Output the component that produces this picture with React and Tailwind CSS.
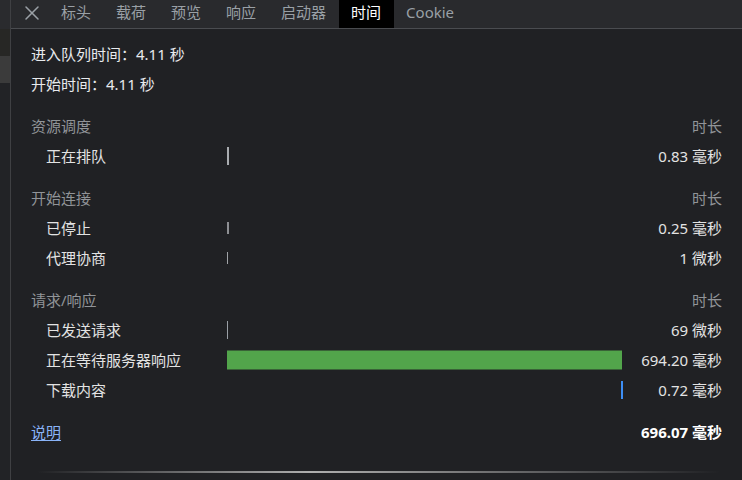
import React from "react";
import { X } from "lucide-react";

const tabs = ["标头", "载荷", "预览", "响应", "启动器", "时间", "Cookie"];

// bars: left/width in px of the bar column, h = bar height, color
const sections = [
  {
    title: "资源调度",
    rows: [
      { label: "正在排队", value: "0.83 毫秒", bar: { left: 0, width: 2, h: 18, color: "#a9acb0" } },
    ],
  },
  {
    title: "开始连接",
    rows: [
      { label: "已停止", value: "0.25 毫秒", bar: { left: 0, width: 2, h: 12, color: "#8d8f93" } },
      { label: "代理协商", value: "1 微秒", bar: { left: 0, width: 1, h: 12, color: "#a0a3a7" } },
    ],
  },
  {
    title: "请求/响应",
    rows: [
      { label: "已发送请求", value: "69 微秒", bar: { left: 0, width: 1, h: 18, color: "#9aa0a6" } },
      { label: "正在等待服务器响应", value: "694.20 毫秒", bar: { left: 0, width: 395, h: 19, color: "#52a54b" } },
      { label: "下载内容", value: "0.72 毫秒", bar: { left: 394, width: 1.5, h: 18, color: "#3d8ef5" } },
    ],
  },
];

export default function App() {
  return (
    <div className="flex h-[480px] w-[742px] overflow-hidden bg-[#202124] font-['Noto_Sans','Noto_Sans_CJK_SC',sans-serif] text-[15px]">
      {/* --- LEFT STRIP (request list edge) --- */}
      <div className="flex w-[11px] flex-col border-r border-[#3f4043]">
        <div className="h-[29px] bg-[#2a2b2e]" />
        <div className="h-[27px] bg-[#272725]" />
        <div className="h-[27px] bg-[#3b3b3b]" />
        <div className="flex-1 bg-[#222326]" />
      </div>

      {/* --- MAIN PANEL --- */}
      <div className="flex flex-1 flex-col">
        {/* Tab bar */}
        <div className="flex h-[29px] items-stretch border-b border-[#4a4c50] bg-[#292a2d]">
          <button className="flex items-center pb-[3px] pl-[9px] pr-[4.5px] text-[#9aa0a6]">
            <X size={24} strokeWidth={1.5} />
          </button>
          {tabs.map((t) => (
            <div
              key={t}
              className={
                t === "时间"
                  ? "flex items-center bg-black px-[12.5px] pb-[3px] text-white"
                  : "flex items-center px-[12.5px] pb-[3px] text-[#9aa0a6]"
              }
            >
              {t}
            </div>
          ))}
        </div>

        {/* Content */}
        <div className="flex flex-1 flex-col px-[20px] pt-[10px]">
          <div className="flex h-[30px] items-center text-[#e8eaed]">进入队列时间：4.11 秒</div>
          <div className="flex h-[30px] items-center text-[#e8eaed]">开始时间：4.11 秒</div>

          {sections.map((s) => (
            <div key={s.title} className="mt-[12px]">
              <div className="flex h-[30px] items-center justify-between text-[#919498]">
                <span>{s.title}</span>
                <span>时长</span>
              </div>
              {s.rows.map((r) => (
                <div key={r.label} className="grid h-[30px] grid-cols-[196px_395px_1fr] items-center text-[#e3e3e3]">
                  <span className="pl-[15px]">{r.label}</span>
                  <div className="relative h-full">
                    <div
                      className="absolute top-1/2 -translate-y-1/2"
                      style={{
                        left: r.bar.left,
                        width: r.bar.width,
                        height: r.bar.h,
                        background: r.bar.color,
                      }}
                    />
                  </div>
                  <span className="text-right">{r.value}</span>
                </div>
              ))}
            </div>
          ))}

          {/* Footer */}
          <div className="mt-[12px] flex h-[30px] items-center justify-between">
            <a className="text-[#8ab4f8] underline underline-offset-2">说明</a>
            <span className="font-bold text-white">696.07 毫秒</span>
          </div>

          <div className="ml-[6px] mr-[2px] mt-[24px] h-[2px] bg-gradient-to-r from-transparent via-[#aeaeae] via-40% to-transparent" />
        </div>
      </div>
    </div>
  );
}
